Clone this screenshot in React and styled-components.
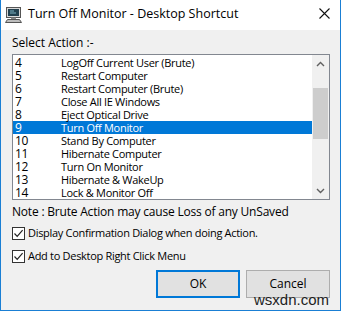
import React from "react";
import styled, { createGlobalStyle } from "styled-components";

const GlobalStyle = createGlobalStyle`
  html, body {
    margin: 0;
    padding: 0;
    background: #ffffff;
  }
  * {
    box-sizing: border-box;
  }
`;

const actions = [
  ["4", "LogOff Current User (Brute)"],
  ["5", "Restart Computer"],
  ["6", "Restart Computer (Brute)"],
  ["7", "Close All IE Windows"],
  ["8", "Eject Optical Drive"],
  ["9", "Turn Off Monitor"],
  ["10", "Stand By Computer"],
  ["11", "Hibernate Computer"],
  ["12", "Turn On Monitor"],
  ["13", "Hibernate & WakeUp"],
  ["14", "Lock & Monitor Off"],
];

const Window = styled.div`
  position: relative;
  width: 341px;
  height: 311px;
  display: flex;
  flex-direction: column;
  border: 1px solid #1a7fd4;
  border-top: none;
  font-family: "Open Sans", "Noto Sans", sans-serif;
  font-size: 12px;
  color: #000;
  overflow: hidden;
`;

const TitleBar = styled.div`
  height: 30px;
  flex: none;
  background: #ffffff;
  display: flex;
  align-items: center;
  padding: 0 0 0 4px;
  gap: 6px;
`;

const Title = styled.div`
  flex: 1;
  font-size: 12.5px;
  line-height: 16px;
  padding-bottom: 3px;
`;

const CloseBtn = styled.div`
  width: 32px;
  height: 30px;
  display: flex;
  align-items: center;
  justify-content: center;
  padding-bottom: 3px;
`;

const Body = styled.div`
  flex: 1;
  background: #f0f0f0;
  padding: 5px 10px 0 11px;
  display: flex;
  flex-direction: column;
`;

const Label = styled.div`
  height: 16px;
  line-height: 16px;
  margin-bottom: 3px;
`;

const ListBox = styled.div`
  height: 146px;
  border: 1px solid #828790;
  background: #fff;
  display: flex;
`;

const Rows = styled.div`
  flex: 1;
  padding-top: 1px;
  font-size: 11px;
  letter-spacing: -0.3px;
`;

const Row = styled.div`
  height: 13px;
  line-height: 13px;
  display: flex;
  background: ${(p) => (p.$selected ? "#0078d7" : "transparent")};
  color: ${(p) => (p.$selected ? "#fff" : "#000")};
`;

const NumCell = styled.span`
  width: 48px;
  padding-left: 2px;
  font-size: 12px;
`;

const NameCell = styled.span`
  white-space: nowrap;
`;

const ScrollBar = styled.div`
  width: 17px;
  background: #f0f0f0;
  display: flex;
  flex-direction: column;
`;

const Arrow = styled.div`
  height: 17px;
  display: flex;
  align-items: center;
  justify-content: center;
`;

const Track = styled.div`
  flex: 1;
  padding: 0 1px;
`;

const Thumb = styled.div`
  margin-top: 16px;
  height: 51px;
  background: #cdcdcd;
`;

const Note = styled.div`
  margin-top: 4px;
  height: 16px;
  line-height: 16px;
  letter-spacing: -0.2px;
  white-space: nowrap;
`;

const CheckRow = styled.label`
  display: flex;
  align-items: center;
  gap: 3px;
  height: 16px;
  line-height: 16px;
  font-size: 11px;
  letter-spacing: -0.3px;
  white-space: nowrap;
  margin-top: ${(p) => p.$top}px;
`;

const Box = styled.span`
  width: 13px;
  height: 13px;
  flex: none;
  border: 1px solid #333;
  background: #fff;
  display: flex;
  align-items: center;
  justify-content: center;
`;

const Buttons = styled.div`
  display: flex;
  justify-content: flex-end;
  gap: 6px;
  margin-top: 6px;
`;

const Button = styled.div`
  width: 84px;
  height: 28px;
  display: flex;
  align-items: center;
  justify-content: center;
  background: #e1e1e1;
  border: ${(p) => (p.$default ? "2px solid #0078d7" : "1px solid #adadad")};
  padding-bottom: 1px;
`;

const Watermark = styled.div`
  position: absolute;
  right: 11px;
  bottom: 2px;
  font-family: "Liberation Sans", Arial, sans-serif;
  font-size: 15px;
  color: #1e1e1e;
`;

const AppIcon = () => (
  <svg width="17" height="16" viewBox="0 0 17 16">
    <rect x="1.5" y="0.5" width="14" height="10" fill="#d8d8d8" stroke="#555" />
    <rect x="3" y="2" width="11" height="7" fill="#23414f" />
    <path d="M5 4h4M5 6h6" stroke="#7fb4c4" strokeWidth="1" />
    <rect x="6" y="10.5" width="5" height="1.5" fill="#888" />
    <path d="M0.5 15.5 L2.5 12.5 H14.5 L16.5 15.5 Z" fill="#bdbdbd" stroke="#555" />
  </svg>
);

const Check = () => (
  <svg width="11" height="11" viewBox="0 0 11 11">
    <path d="M1.5 5.5 L4.2 8.3 L9.6 2.2" fill="none" stroke="#222" strokeWidth="1.2" />
  </svg>
);

const Chevron = ({ down }) => (
  <svg width="9" height="6" viewBox="0 0 9 6">
    <path
      d={down ? "M1 1 L4.5 4.5 L8 1" : "M1 5 L4.5 1.5 L8 5"}
      fill="none"
      stroke="#606060"
      strokeWidth="1.4"
    />
  </svg>
);

export default function App() {
  return (
    <>
      <GlobalStyle />
      <Window>
        <TitleBar>
          <AppIcon />
          <Title>Turn Off Monitor - Desktop Shortcut</Title>
          <CloseBtn>
            <svg width="11" height="11" viewBox="0 0 11 11">
              <path d="M0.5 0.5 L10.5 10.5 M10.5 0.5 L0.5 10.5" stroke="#111" strokeWidth="1.1" />
            </svg>
          </CloseBtn>
        </TitleBar>
        <Body>
          <Label>Select Action :-</Label>
          <ListBox>
            <Rows>
              {actions.map(([n, name]) => (
                <Row key={n} $selected={n === "9"}>
                  <NumCell>{n}</NumCell>
                  <NameCell>{name}</NameCell>
                </Row>
              ))}
            </Rows>
            <ScrollBar>
              <Arrow>
                <Chevron />
              </Arrow>
              <Track>
                <Thumb />
              </Track>
              <Arrow>
                <Chevron down />
              </Arrow>
            </ScrollBar>
          </ListBox>
          <Note>Note : Brute Action may cause Loss of any UnSaved</Note>
          <CheckRow $top={5}>
            <Box>
              <Check />
            </Box>
            Display Confirmation Dialog when doing Action.
          </CheckRow>
          <CheckRow $top={7}>
            <Box>
              <Check />
            </Box>
            Add to Desktop Right Click Menu
          </CheckRow>
          <Buttons>
            <Button $default>OK</Button>
            <Button>Cancel</Button>
          </Buttons>
        </Body>
        <Watermark>wsxdn.com</Watermark>
      </Window>
    </>
  );
}
